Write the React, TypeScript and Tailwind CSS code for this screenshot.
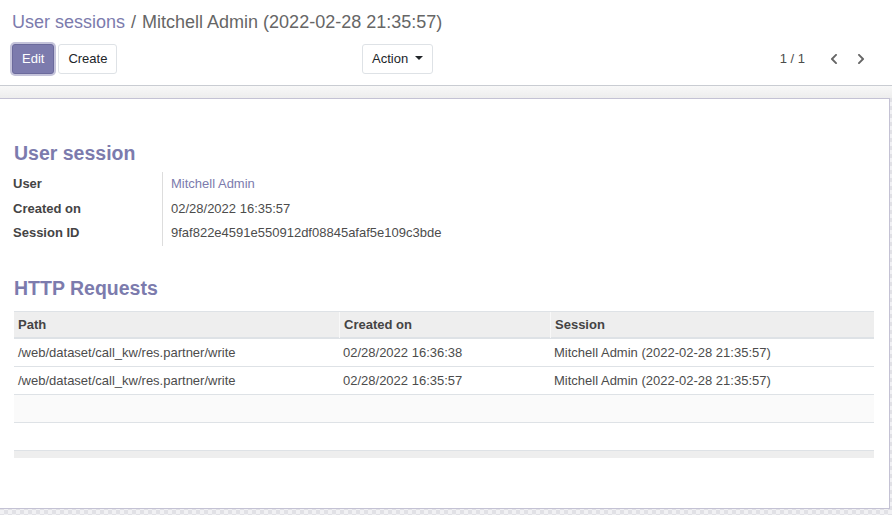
import React from "react";
import { FaChevronLeft, FaChevronRight } from "react-icons/fa";

const purple = "text-[#7c7bad]";

const fields = [
    { label: "User", value: "Mitchell Admin", link: true },
    { label: "Created on", value: "02/28/2022 16:35:57" },
    { label: "Session ID", value: "9faf822e4591e550912df08845afaf5e109c3bde" }
];

const requests = [
    { path: "/web/dataset/call_kw/res.partner/write", created: "02/28/2022 16:36:38", session: "Mitchell Admin (2022-02-28 21:35:57)" },
    { path: "/web/dataset/call_kw/res.partner/write", created: "02/28/2022 16:35:57", session: "Mitchell Admin (2022-02-28 21:35:57)" }
];

const ControlPanel = () => (
    <div className="h-[86px] border-b border-[#c9ccd2] bg-white px-3">
        <div className="pt-[9px] h-[44px] text-[18px] leading-[26px] text-[#666]">
            <span className={purple}>User sessions</span>
            <span className="mx-[6px]">/</span>
            <span>Mitchell Admin (2022-02-28 21:35:57)</span>
        </div>
        <div className="grid grid-cols-[350px_auto_1fr] items-center">
            <div className="flex gap-1">
                <button className="h-[30px] px-[9px] rounded-[3px] bg-[#7c7bad] border border-[#6b6a9c] text-white text-[13px] shadow-[0_0_0_2px_rgba(124,123,173,0.45)]">
                    Edit
                </button>
                <button className="h-[30px] px-[9px] rounded-[3px] bg-white border border-[#dee2e6] text-[#212529] text-[13px]">
                    Create
                </button>
            </div>
            <button className="h-[30px] px-[9px] rounded-[3px] bg-white border border-[#dee2e6] text-[#212529] text-[13px] flex items-center gap-[7px]">
                Action
                <span className="w-0 h-0 border-l-[4px] border-r-[4px] border-t-[4px] border-l-transparent border-r-transparent border-t-[#212529] -mt-[3px]" />
            </button>
            <div className="flex items-center justify-end text-[13px] text-[#4c4c4c] pr-[6px]">
                <span>1 / 1</span>
                <span className="ml-[15px] text-[#666] w-[27px] flex justify-center">
                    <FaChevronLeft size={12} />
                </span>
                <span className="text-[#666] w-[27px] flex justify-center">
                    <FaChevronRight size={12} />
                </span>
            </div>
        </div>
    </div>
);

const Heading = ({ children }: { children: React.ReactNode }) => (
    <h2 className={`text-[19.5px] leading-[24px] font-bold ${purple} pl-[13px]`}>{children}</h2>
);

const App = () => {
    return (
        <div
            className="w-[892px] h-[515px] overflow-hidden bg-white text-[#4c4c4c]"
            style={{ fontFamily: "'Liberation Sans', Arial, sans-serif" }}
        >
            <ControlPanel />
            <div className="h-[429px] bg-[repeating-conic-gradient(#e1e1e6_0%_25%,#f1f1f4_0%_50%)] bg-[length:8px_8px]">
                <div className="h-[12px] bg-[linear-gradient(#f8f8f8,#ededed)]" />
                <div className="h-[411px] bg-white border border-[#c4c2d4] -ml-[2px] w-[892px]">
                    <div className="pt-[42px] pl-[2px]">
                        <Heading>User session</Heading>
                        <div className="mt-[7px] grid grid-cols-[162px_1fr] w-fit text-[13px]">
                            {fields.map((f) => (
                                <React.Fragment key={f.label}>
                                    <div className="h-[24.5px] leading-[24.5px] pl-[12px] font-bold text-[#444] border-r border-[#ddd]">
                                        {f.label}
                                    </div>
                                    <div className={`h-[24.5px] leading-[24.5px] pl-[8px] ${f.link ? purple : ""}`}>{f.value}</div>
                                </React.Fragment>
                            ))}
                        </div>
                        <div className="mt-[30px]">
                            <Heading>HTTP Requests</Heading>
                        </div>
                        <div className="mt-[11px] ml-[13px] w-[860px] text-[13px]">
                            <div className="grid grid-cols-[325px_211px_1fr] h-[28px] bg-[#eeeeee] border-t border-[#dee2e6] border-b-2 border-b-[#dee2e6] font-bold text-[#444]">
                                <div className="pl-[4px] leading-[26px]">Path</div>
                                <div className="pl-[4px] leading-[26px] border-l border-[#f8f8f8]">Created on</div>
                                <div className="pl-[4px] leading-[26px] border-l border-[#f8f8f8]">Session</div>
                            </div>
                            {requests.map((r, i) => (
                                <div key={i} className="grid grid-cols-[325px_211px_1fr] h-[28px] border-b border-[#dee2e6]">
                                    <div className="pl-[4px] leading-[27px]">{r.path}</div>
                                    <div className="pl-[4px] leading-[27px]">{r.created}</div>
                                    <div className="pl-[4px] leading-[27px]">{r.session}</div>
                                </div>
                            ))}
                            <div className="h-[28px] bg-[#fafafa] border-b border-[#dee2e6]" />
                            <div className="h-[28px] border-b border-[#dee2e6]" />
                            <div className="h-[7px] bg-[#eeeeee]" />
                        </div>
                    </div>
                </div>
            </div>
        </div>
    );
};

export default App;
